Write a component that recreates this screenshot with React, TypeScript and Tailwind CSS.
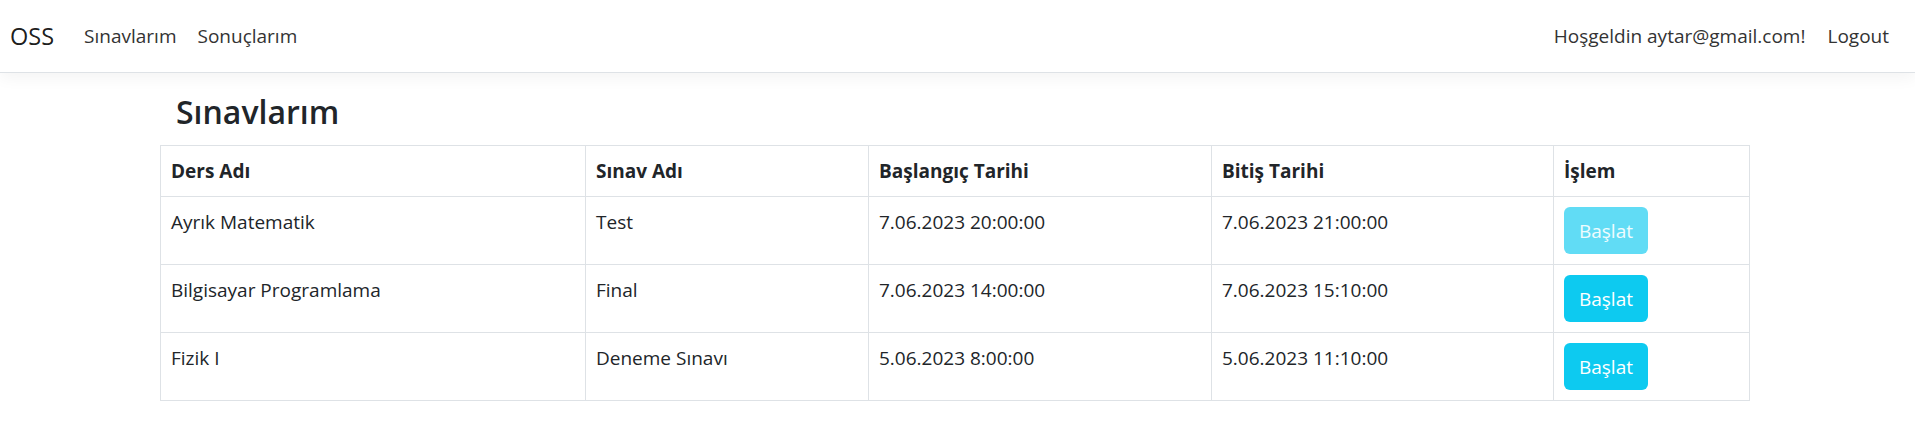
import React from 'react';

interface Sinav {
  ders: string;
  sinav: string;
  baslangic: string;
  bitis: string;
  aktif: boolean;
}

const sinavlar: Sinav[] = [
  { ders: "Ayrık Matematik", sinav: "Test", baslangic: "7.06.2023 20:00:00", bitis: "7.06.2023 21:00:00", aktif: false },
  { ders: "Bilgisayar Programlama", sinav: "Final", baslangic: "7.06.2023 14:00:00", bitis: "7.06.2023 15:10:00", aktif: true },
  { ders: "Fizik I", sinav: "Deneme Sınavı", baslangic: "5.06.2023 8:00:00", bitis: "5.06.2023 11:10:00", aktif: true },
];

export default function App() {
  return (
    <div className="min-h-[431px] bg-white text-[#212529] font-['Open_Sans',sans-serif] text-[19px] leading-[30px]">
      {/* Navbar */}
      <nav className="h-[73px] border-b border-[#dee2e6] flex items-center pl-[10px] pr-[26px] shadow-[0_6px_14px_rgba(0,0,0,0.045)] relative">
        <span className="text-[23.5px] text-black/90 mr-[30px]">OSS</span>
        <a className="text-[#333] mr-[21px]">Sınavlarım</a>
        <a className="text-[#333]">Sonuçlarım</a>
        <div className="ml-auto flex items-center gap-[22px]">
          <span className="text-[#333]">Hoşgeldin aytar@gmail.com!</span>
          <a className="text-[#333]">Logout</a>
        </div>
      </nav>

      {/* İçerik */}
      <div className="ml-[160px] pt-[18px]">
        <h3 className="ml-[16px] text-[32px] font-semibold leading-[42px] mb-[12px]">Sınavlarım</h3>
        <table className="table-fixed border-collapse w-[1589px]">
          <colgroup>
            <col className="w-[425px]" />
            <col className="w-[283px]" />
            <col className="w-[343px]" />
            <col className="w-[342px]" />
            <col className="w-[196px]" />
          </colgroup>
          <thead>
            <tr className="text-left">
              <th className="border border-[#dee2e6] px-[10px] py-[10px] font-bold align-top">Ders Adı</th>
              <th className="border border-[#dee2e6] px-[10px] py-[10px] font-bold align-top">Sınav Adı</th>
              <th className="border border-[#dee2e6] px-[10px] py-[10px] font-bold align-top">Başlangıç Tarihi</th>
              <th className="border border-[#dee2e6] px-[10px] py-[10px] font-bold align-top">Bitiş Tarihi</th>
              <th className="border border-[#dee2e6] px-[10px] py-[10px] font-bold align-top">İşlem</th>
            </tr>
          </thead>
          <tbody>
            {sinavlar.map((s, idx) => (
              <tr key={idx}>
                <td className="border border-[#dee2e6] px-[10px] py-[10px] align-top">{s.ders}</td>
                <td className="border border-[#dee2e6] px-[10px] py-[10px] align-top">{s.sinav}</td>
                <td className="border border-[#dee2e6] px-[10px] py-[10px] align-top">{s.baslangic}</td>
                <td className="border border-[#dee2e6] px-[10px] py-[10px] align-top">{s.bitis}</td>
                <td className="border border-[#dee2e6] px-[10px] py-[10px] align-top">
                  <button
                    disabled={!s.aktif}
                    className={
                      s.aktif
                        ? "h-[47px] w-[84px] rounded-[6px] bg-[#0dcaf0] text-white"
                        : "h-[47px] w-[84px] rounded-[6px] bg-[#61dcf5] text-white/90"
                    }
                  >
                    Başlat
                  </button>
                </td>
              </tr>
            ))}
          </tbody>
        </table>
      </div>
    </div>
  );
}
